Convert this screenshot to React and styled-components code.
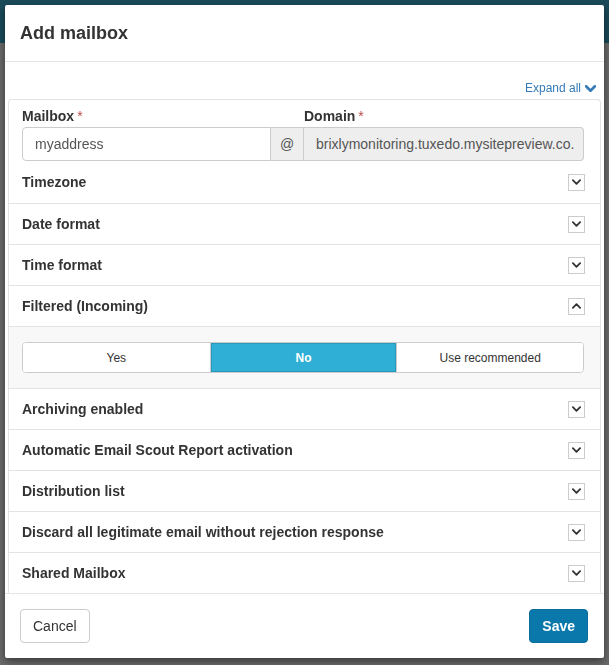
import React from 'react';
import styled, { createGlobalStyle } from 'styled-components';

const GlobalStyle = createGlobalStyle`
  *, *::before, *::after { box-sizing: border-box; }
  html, body { margin: 0; padding: 0; }
  body {
    font-family: 'Liberation Sans', Arial, sans-serif;
    font-size: 14px;
    color: #333;
    background: #6b6b6b;
    overflow: hidden;
  }
`;

const Backdrop = styled.div`
  position: fixed;
  inset: 0;
  background: linear-gradient(to bottom, #1a4b5a 0, #1a4b5a 43px, #6b6b6b 43px);
`;

const Modal = styled.div`
  position: absolute;
  top: 5px;
  left: 5px;
  width: 599px;
  background: #fff;
  border-radius: 2px;
  box-shadow: 0 3px 9px rgba(0, 0, 0, 0.5);
`;

const Header = styled.div`
  padding: 15px;
  border-bottom: 1px solid #e5e5e5;
`;

const Title = styled.h4`
  margin: 0;
  font-size: 18px;
  font-weight: 700;
  line-height: 26px;
  color: #333;
`;

const Body = styled.div`
  padding: 18px 3px 0;
`;

const ExpandRow = styled.div`
  display: flex;
  justify-content: flex-end;
  padding-right: 5px;
  margin-bottom: 3px;
`;

const ExpandLink = styled.a`
  display: inline-flex;
  align-items: center;
  gap: 4px;
  font-size: 12px;
  line-height: 16px;
  color: #337ab7;
  text-decoration: none;
  cursor: pointer;
`;

const Panel = styled.div`
  border: 1px solid #e3e3e3;
  border-bottom: none;
  border-radius: 4px 4px 0 0;
`;

const FieldBlock = styled.div`
  padding: 6px 16px 0 13px;
`;

const LabelRow = styled.div`
  display: grid;
  grid-template-columns: 282px 1fr;
`;

const Label = styled.label`
  display: block;
  font-size: 14px;
  font-weight: 700;
  line-height: 20px;
  margin-bottom: 1px;
  color: #333;
`;

const Required = styled.span`
  color: #b94a48;
  font-weight: 400;
  margin-left: 3px;
`;

const InputGroup = styled.div`
  display: flex;
  height: 34px;
`;

const TextInput = styled.input`
  flex: ${p => (p.$width ? `0 0 ${p.$width}px` : '1')};
  min-width: 0;
  height: 34px;
  padding: 0 ${p => (p.$disabled ? '3px' : '12px')} 0 12px;
  font-family: inherit;
  font-size: 14px;
  color: #555;
  background: ${p => (p.$disabled ? '#eee' : '#fff')};
  border: 1px solid #ccc;
  border-radius: ${p => (p.$left ? '4px 0 0 4px' : '0 4px 4px 0')};
  ${p => (p.$left ? '' : 'border-left: none;')}
  outline: none;
`;

const Addon = styled.span`
  flex: 0 0 33px;
  display: flex;
  align-items: center;
  justify-content: center;
  background: #eee;
  border: 1px solid #ccc;
  border-left: none;
  color: #555;
  font-size: 14px;
`;

const Row = styled.div`
  display: flex;
  align-items: center;
  justify-content: space-between;
  height: ${p => p.$h || 41}px;
  padding: 0 15px 0 13px;
  border-bottom: ${p => (p.$last ? 'none' : '1px solid #e3e3e3')};
`;

const RowLabel = styled.span`
  font-size: 14px;
  font-weight: 700;
  color: #333;
`;

const ToggleBox = styled.span`
  width: 17px;
  height: 17px;
  display: flex;
  align-items: center;
  justify-content: center;
  border: 1px solid #ccc;
  background: #fff;
`;

const Expanded = styled.div`
  background: #f8f8f8;
  padding: 15px 16px 15px 13px;
  border-bottom: 1px solid #e3e3e3;
`;

const BtnGroup = styled.div`
  display: grid;
  grid-template-columns: 1fr 1fr 1fr;
  border: 1px solid #ccc;
  border-radius: 4px;
  overflow: hidden;
  background: #fff;
`;

const SegBtn = styled.button`
  height: 29px;
  border: none;
  border-left: ${p => (p.$first ? 'none' : '1px solid #ccc')};
  background: ${p => (p.$active ? '#2fafd6' : '#fff')};
  color: ${p => (p.$active ? '#fff' : '#333')};
  font-family: inherit;
  font-size: 12px;
  font-weight: ${p => (p.$active ? 700 : 400)};
  cursor: pointer;
  ${p => p.$active && 'box-shadow: inset 0 0 0 1px #2699bd;'}
`;

const Footer = styled.div`
  display: flex;
  justify-content: space-between;
  padding: 15px 16px 15px 15px;
  border-top: 1px solid #e5e5e5;
`;

const Button = styled.button`
  height: 34px;
  padding: 0 12px;
  font-family: inherit;
  font-size: 14px;
  font-weight: ${p => (p.$primary ? 700 : 400)};
  color: ${p => (p.$primary ? '#fff' : '#333')};
  background: ${p => (p.$primary ? '#0a78aa' : '#fff')};
  border: 1px solid ${p => (p.$primary ? '#0a6d9b' : '#ccc')};
  border-radius: 4px;
  cursor: pointer;
  min-width: ${p => (p.$primary ? '58px' : '69px')};
`;

const Chevron = ({ up, color = '#333', w = 9, h = 6, sw = 2 }) => (
  <svg width={w} height={h} viewBox="0 0 10 6" fill="none">
    <path
      d={up ? 'M1 5 L5 1 L9 5' : 'M1 1 L5 5 L9 1'}
      stroke={color}
      strokeWidth={sw}
      strokeLinecap="round"
      strokeLinejoin="round"
    />
  </svg>
);

const rowsBefore = ['Date format', 'Time format'];
const rowsAfter = [
  'Archiving enabled',
  'Automatic Email Scout Report activation',
  'Distribution list',
  'Discard all legitimate email without rejection response',
];

export default function App() {
  return (
    <>
      <GlobalStyle />
      <Backdrop />
      <Modal>
        <Header>
          <Title>Add mailbox</Title>
        </Header>

        <Body>
          <ExpandRow>
            <ExpandLink>
              Expand all <Chevron color="#337ab7" w={11} h={7} sw={2.4} />
            </ExpandLink>
          </ExpandRow>

          <Panel>
            <FieldBlock>
              <LabelRow>
                <Label>Mailbox<Required>*</Required></Label>
                <Label>Domain<Required>*</Required></Label>
              </LabelRow>
              <InputGroup>
                <TextInput $left $width={249} defaultValue="myaddress" />
                <Addon>@</Addon>
                <TextInput $disabled readOnly defaultValue="brixlymonitoring.tuxedo.mysitepreview.co." />
              </InputGroup>
            </FieldBlock>

            <Row $h={43}>
              <RowLabel>Timezone</RowLabel>
              <ToggleBox><Chevron /></ToggleBox>
            </Row>
            {rowsBefore.map(r => (
              <Row key={r}>
                <RowLabel>{r}</RowLabel>
                <ToggleBox><Chevron /></ToggleBox>
              </Row>
            ))}
            <Row>
              <RowLabel>Filtered (Incoming)</RowLabel>
              <ToggleBox><Chevron up /></ToggleBox>
            </Row>
            <Expanded>
              <BtnGroup>
                <SegBtn $first>Yes</SegBtn>
                <SegBtn $active>No</SegBtn>
                <SegBtn>Use recommended</SegBtn>
              </BtnGroup>
            </Expanded>
            {rowsAfter.map(r => (
              <Row key={r}>
                <RowLabel>{r}</RowLabel>
                <ToggleBox><Chevron /></ToggleBox>
              </Row>
            ))}
            <Row $last $h={40}>
              <RowLabel>Shared Mailbox</RowLabel>
              <ToggleBox><Chevron /></ToggleBox>
            </Row>
          </Panel>
        </Body>

        <Footer>
          <Button>Cancel</Button>
          <Button $primary>Save</Button>
        </Footer>
      </Modal>
    </>
  );
}
